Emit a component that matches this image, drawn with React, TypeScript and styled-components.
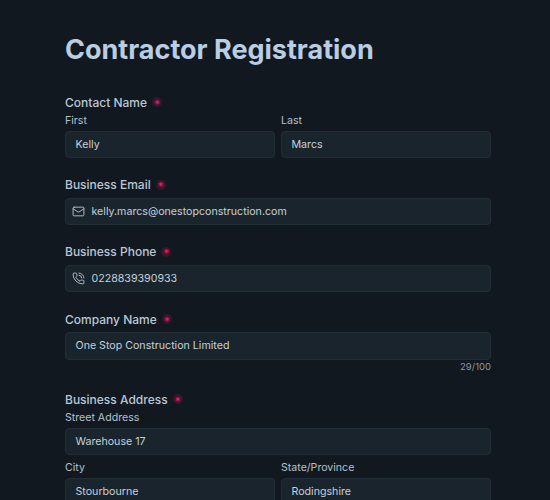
import styled, { createGlobalStyle } from "styled-components";
import { Mail, PhoneCall } from "lucide-react";

const Global = createGlobalStyle`
  html, body {
    margin: 0;
    height: 500px;
    overflow: hidden;
    background: #12181f;
  }
  * { box-sizing: border-box; }
`;

const Page = styled.div`
  width: 426px;
  margin-left: 65px;
  padding-top: 33px;
  font-family: Inter, "Liberation Sans", sans-serif;
`;

const Title = styled.h1`
  margin: 0 0 26.5px;
  font-size: 27px;
  line-height: 34px;
  font-weight: 700;
  color: #b9cde3;
`;

const Field = styled.div`
  margin-bottom: 18.2px;
`;

const Label = styled.div`
  display: flex;
  align-items: center;
  gap: 5px;
  margin-bottom: 4.5px;
  font-size: 12px;
  line-height: 17px;
  font-weight: 500;
  color: #b9c7d6;
`;

const Required = styled.span`
  width: 10px;
  height: 10px;
  display: flex;
  align-items: center;
  justify-content: center;
  border-radius: 50%;
  background: radial-gradient(circle, rgba(226, 18, 92, 0.3), rgba(226, 18, 92, 0.08));
  color: #ee1a66;
  font-size: 11px;
  line-height: 10px;
  padding-top: 3px;
`;

const SubLabel = styled.div`
  font-size: 10.6px;
  line-height: 15px;
  margin: -2px 0 2.5px;
  color: #b4c0cb;
`;

const Row = styled.div`
  display: grid;
  grid-template-columns: 1fr 1fr;
  gap: 6px;
`;

const RowBelow = styled(Row)`
  margin-top: 7px;
`;

const Input = styled.div`
  height: 27.5px;
  display: flex;
  align-items: center;
  gap: 6.5px;
  padding: 0 9.5px;
  background: #1a242c;
  border: 1px solid #222e37;
  border-radius: 4px;
  font-size: 10.65px;
  color: #c6d0da;
  svg {
    color: #b4c0cb;
    flex: none;
    margin-left: -3.5px;
  }
`;

const Counter = styled.div`
  text-align: right;
  font-size: 9.5px;
  line-height: 13px;
  color: #8a96a1;
`;

export default function App() {
  return (
    <Page>
      <Global />
      <Title>Contractor Registration</Title>
      <Field>
        <Label>Contact Name <Required>*</Required></Label>
        <Row>
          <div><SubLabel>First</SubLabel><Input>Kelly</Input></div>
          <div><SubLabel>Last</SubLabel><Input>Marcs</Input></div>
        </Row>
      </Field>
      <Field>
        <Label>Business Email <Required>*</Required></Label>
        <Input><Mail size={13} strokeWidth={1.75} />kelly.marcs@onestopconstruction.com</Input>
      </Field>
      <Field>
        <Label>Business Phone <Required>*</Required></Label>
        <Input><PhoneCall size={13} strokeWidth={1.75} />0228839390933</Input>
      </Field>
      <Field>
        <Label>Company Name <Required>*</Required></Label>
        <Input>One Stop Construction Limited</Input>
        <Counter>29/100</Counter>
      </Field>
      <Field>
        <Label>Business Address <Required>*</Required></Label>
        <SubLabel>Street Address</SubLabel>
        <Input>Warehouse 17</Input>
        <RowBelow>
          <div><SubLabel>City</SubLabel><Input>Stourbourne</Input></div>
          <div><SubLabel>State/Province</SubLabel><Input>Rodingshire</Input></div>
        </RowBelow>
      </Field>
    </Page>
  );
}
